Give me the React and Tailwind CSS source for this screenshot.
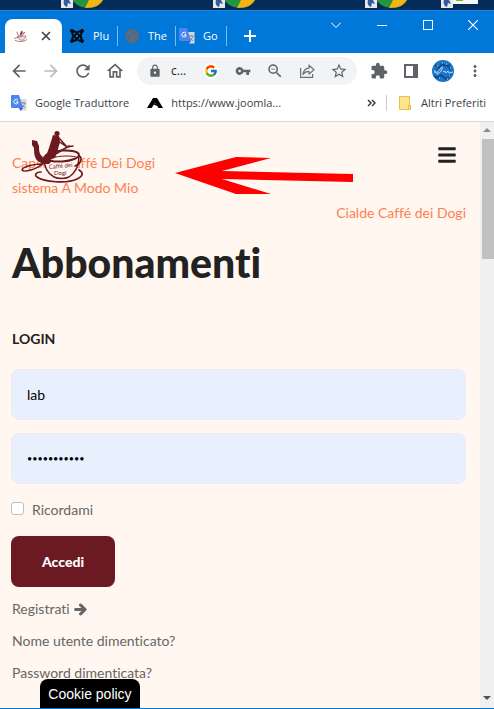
import React, { useState } from 'react';
import {
    MdArrowBack,
    MdArrowForward,
    MdRefresh,
    MdOutlineHome,
    MdLock,
    MdVpnKey,
    MdZoomOut,
    MdStarBorder,
    MdExtension,
    MdMoreVert,
} from 'react-icons/md';
import { FaJoomla, FaBars, FaArrowRight } from 'react-icons/fa';
import { FcGoogle } from 'react-icons/fc';

const CupLogo = ({ className }) => (
    <svg viewBox="0 0 64 54" className={className} fill="none" stroke="#6b1a22" strokeLinecap="round" aria-hidden="true">
        {/* saucer */}
        <path d="M20 41c-5 0-7 3-4 5 7 5 30 7 40 2 6-3 7-6 2-9" strokeWidth="1.700" />
        {/* cup */}
        <path d="M23 26c0 11 4 17 10 20 4 2 11 2 15 0 6-4 10-12 10-21z" fill="#fff7f0" strokeWidth="1.500" />
        <ellipse cx="41" cy="25" rx="17" ry="5.500" fill="#fff7f0" strokeWidth="2" transform="rotate(-4 41 25)" />
        <path d="M28 28c6-3 20-4 27-2" strokeWidth="1" />
        <path d="M58 25c4 1 2 8-4 10" strokeWidth="1.700" />
        {/* gondola prow */}
        <path d="M11 9l5 1 2 5c0 7 1 9 5 12l9 2-4 4c-13 0-15-6-15-16l-2-3z" fill="#6b1a22" stroke="none" />
        {/* rower */}
        <circle cx="36" cy="2.600" r="2.600" fill="#6b1a22" stroke="none" />
        <path d="M32 4l6 1 1 6-2 7-3 9-11 3 5-13z" fill="#6b1a22" stroke="none" />
        <path d="M38 7l8 9M37 10l9 6M46 16l6-1" strokeWidth="1.500" />
        {/* oar */}
        <path d="M48 15L33 24 20 34" strokeWidth="1.800" />
        <path d="M21 33c-6 0-19 2-20 6 2 3 15-1 20-6z" strokeWidth="1.500" />
        <g fill="#6b1a22" stroke="none" fontFamily="Lato, sans-serif" fontSize="6">
            <text x="28" y="38" transform="rotate(-5 28 38)">Caffé dei</text>
            <text x="33" y="44">Dogi</text>
        </g>
    </svg>
);

const TabCup = () => (
    <svg viewBox="0 0 16 14" className="h-3 w-4" fill="none" stroke="#9c656a" aria-hidden="true">
        <path d="M4 7c1 4 3 5 5 5s4-2 5-5z" fill="#ead9d8" strokeWidth=".8" />
        <path d="M3 2l2 5M9 1L7 7M9 4l4-1M12 3l-3 4L0 10M1 12c4 2 10 2 14-1" />
        <path d="M7 4l2-3 1 1-2 5z" fill="#7a2b33" stroke="none" />
    </svg>
);

const GlobeIcon = () => (
    <svg viewBox="0 0 14 14" className="h-[14px] w-[14px]" aria-hidden="true">
        <circle cx="7" cy="7" r="7" fill="#66696d" />
        <path d="M2 6c2 0 3 .5 3.500 2L4.500 8.500l.5 2-.5 1C3 11 1.500 8 2 6zM7 2.500h3l1.500 2-2 .5L8 5 7 6.500 6 4.500zM9 8.500l2.500-.5-1 2.500-1.500 1z" fill="#2a73b3" />
    </svg>
);

const TranslateIcon = () => (
    <svg viewBox="0 0 16 16" className="h-4 w-4 shrink-0" aria-hidden="true">
        <path d="M7 4h8.500v11.500H10z" fill="#d5d8dc" />
        <path d="M9.500 8h5M12 7v1M14 8c-.5 2-2 3.500-4 4.500M10.500 9.500c1 1.500 2 2.500 3.500 3" stroke="#6b7b83" strokeWidth=".8" fill="none" />
        <path d="M1 0h7l4 13H1a1 1 0 0 1-1-1V1a1 1 0 0 1 1-1z" fill="#4a86ee" />
        <path d="M8 13h4l-2.500 3z" fill="#2f5fc4" />
        <path d="M7 5.200A2.300 2.300 0 1 0 7 8V6.900H4.900" stroke="#fff" strokeWidth="1" fill="none" />
    </svg>
);

const ShareIcon = () => (
    <svg viewBox="0 0 16 16" className="h-4 w-4" fill="none" stroke="#6b6f74" strokeWidth="1.2" aria-hidden="true">
        <path d="M1.600 5v9.400h12V11" />
        <path d="M4 11.500c.4-4 2.500-6 6-6.300V2.200l5 4.500-5 4.400V8.300c-2.700 0-4.500 1-6 3.200z" strokeLinejoin="round" />
    </svg>
);

const ProfilePicture = () => (
    <svg viewBox="0 0 22 22" className="h-[22px] w-[22px]" aria-hidden="true">
        <circle cx="11" cy="11" r="11" fill="#1b74c4" />
        <path d="M3 5l4 3 3-4 4 2 4-1M2 16l4 2 3-3 5 4 5-4M4 9l2 3M16 6l3 4" stroke="#0c4688" strokeWidth="1.500" fill="none" />
        <path d="M5 6h1M14 4h1M7 18h1M17 16h1M10 3h1M2 11h2M15 19h1M18 8h1M5 14h1" stroke="#7cc0f0" strokeWidth="1.500" />
        <path d="M2 12c3 1 5-1 7-4 1-2 2-1 1 1-1 3-3 5-6 4M11 12l2-1 1 2 2-2 1 2 4-1" stroke="#e5f3ff" strokeWidth=".8" fill="none" />
    </svg>
);

const DesktopIcon = ({ kind }) => {
    if (kind === 'none') return <div className="w-[76px] shrink-0" />;
    return (
        <div className="flex w-[76px] shrink-0 overflow-hidden">
            <svg viewBox="0 0 42 10" className="h-[10px] w-[42px]" aria-hidden="true">
                {kind === 'chrome' ? (
                    <>
                        <path d="M11 0h31c-3 5-8 8-14 8-7 0-12-2-17-8z" fill="#239440" />
                        <path d="M28 0h14c-3 5-8 8-18 8z" fill="#f4b40f" />
                    </>
                ) : (
                    <>
                        <path d="M12 0h25v4H12z" fill="#f7f7f7" />
                        <path d="M15 0h7v1h-7z" fill="#77b82a" />
                    </>
                )}
                <path d="M0 0h12v8H0z" fill="#e8e8e8" />
                <path d="M3 0h5l2 4-3-1-1 4c-3-1-4-4-3-7z" fill="#315a9c" />
            </svg>
        </div>
    );
};

const desktopIcons = ['chrome', 'none', 'chrome', 'none', 'chrome', 'page'];

const backgroundTabs = [
    { title: 'Plu', icon: <FaJoomla size={16} className="text-black" /> },
    { title: 'The', icon: <GlobeIcon /> },
    { title: 'Go', icon: <TranslateIcon /> },
];

const TabStrip = () => (
    <div className="flex h-[43px] items-end border-t border-[#1b83dc] bg-[#0078d9] pl-[5px] text-white">
        <div className="flex h-[34px] w-[57px] shrink-0 items-center justify-between rounded-t-lg bg-white px-2">
            <TabCup />
            <button type="button" aria-label="Chiudi scheda" className="mr-[3px] text-[#3c4043]">
                <svg viewBox="0 0 10 10" className="h-[10px] w-[10px]" stroke="currentColor" strokeWidth="1.6">
                    <path d="M1 1l8 8M9 1l-8 8" />
                </svg>
            </button>
        </div>
        {backgroundTabs.map((tab) => (
            <div key={tab.title} className="flex h-[34px] w-[55px] shrink-0 items-center gap-2 pl-[7px]">
                <span className="flex w-4 shrink-0 justify-center">{tab.icon}</span>
                <span className="grow text-[11px] whitespace-nowrap">{tab.title}</span>
                <span className="h-5 w-px shrink-0 bg-[#7fbbec]" />
            </div>
        ))}
        <button type="button" aria-label="Nuova scheda" className="flex h-[34px] w-[46px] items-center justify-center">
            <svg viewBox="0 0 12 12" className="h-3 w-3" stroke="currentColor" strokeWidth="2">
                <path d="M6 0v12M0 6h12" />
            </svg>
        </button>
        <div className="mb-[14px] ml-auto flex self-stretch">
            <button type="button" aria-label="Cerca schede" className="flex w-[46px] items-center justify-center">
                <svg viewBox="0 0 10 6" className="h-[6px] w-[10px]" fill="none" stroke="currentColor">
                    <path d="M0 .5l5 5 5-5" />
                </svg>
            </button>
            <button type="button" aria-label="Riduci a icona" className="flex w-[46px] items-center justify-center">
                <span className="h-px w-[10px] bg-white" />
            </button>
            <button type="button" aria-label="Ingrandisci" className="flex w-[46px] items-center justify-center">
                <span className="h-[10px] w-[10px] border border-white" />
            </button>
            <button type="button" aria-label="Chiudi" className="flex w-[43px] items-center justify-center">
                <svg viewBox="0 0 10 10" className="h-[10px] w-[10px]" stroke="currentColor" strokeWidth="1.2">
                    <path d="M0 0l10 10M10 0L0 10" />
                </svg>
            </button>
        </div>
    </div>
);

const Toolbar = () => (
    <div className="flex h-9 items-center bg-white px-[3px] text-[#5f6368]">
        <button type="button" aria-label="Indietro" className="flex w-8 justify-center"><MdArrowBack size={20} /></button>
        <button type="button" aria-label="Avanti" className="flex w-8 justify-center text-[#babcbe]"><MdArrowForward size={20} /></button>
        <button type="button" aria-label="Ricarica" className="flex w-8 justify-center"><MdRefresh size={20} /></button>
        <button type="button" aria-label="Pagina iniziale" className="flex w-8 justify-center"><MdOutlineHome size={20} /></button>
        <div className="mx-[6px] flex h-7 min-w-0 grow items-center rounded-full bg-[#f1f3f4] pr-[2px] pl-[11px]">
            <MdLock size={14} className="shrink-0" />
            <span className="ml-[9px] grow text-xs text-[#202124]">c...</span>
            <span className="flex w-8 justify-center">
                <span className="flex h-4 w-4 items-center justify-center rounded-full bg-white"><FcGoogle size={14} /></span>
            </span>
            <button type="button" aria-label="Password" className="flex w-8 justify-center"><MdVpnKey size={16} /></button>
            <button type="button" aria-label="Zoom" className="flex w-8 justify-center"><MdZoomOut size={18} /></button>
            <button type="button" aria-label="Condividi" className="flex w-8 justify-center"><ShareIcon /></button>
            <button type="button" aria-label="Preferiti" className="flex w-8 justify-center"><MdStarBorder size={18} /></button>
        </div>
        <button type="button" aria-label="Estensioni" className="flex w-8 justify-center"><MdExtension size={18} /></button>
        <button type="button" aria-label="Riquadro laterale" className="flex w-8 justify-center">
            <span className="h-[14px] w-[14px] border-2 border-r-[5px] border-[#5f6368]" />
        </button>
        <button type="button" aria-label="Profilo" className="flex w-8 justify-center"><ProfilePicture /></button>
        <button type="button" aria-label="Menu" className="flex w-8 justify-center"><MdMoreVert size={18} /></button>
    </div>
);

const BookmarkBar = () => (
    <div className="flex h-[33px] items-center border-b border-[#d8d9d8] bg-white pr-2 pb-1 pl-[11px] text-[11px] whitespace-nowrap text-[#3c4043]">
        <a href="#traduttore" className="flex items-center gap-2"><TranslateIcon />Google Traduttore</a>
        <a href="#joomla" className="ml-[18px] flex items-center gap-2">
            <svg viewBox="0 0 16 12" className="h-3 w-4" aria-hidden="true">
                <path d="M6 1h4l6 10h-4.500L8 5.500 4.500 11H0z" fill="#000" />
                <path d="M4.500 11c1-3 3-4 4-2.500L10.500 9 8 5.500z" fill="#000" />
            </svg>
            https://www.joomla...
        </a>
        <button type="button" aria-label="Altri preferiti nascosti" className="ml-auto flex">
            <svg viewBox="0 0 9 8" className="h-2 w-[9px]" fill="none" stroke="#3c4043" strokeWidth="1.500">
                <path d="M1 1l3 3-3 3M5 1l3 3-3 3" />
            </svg>
        </button>
        <span className="mr-3 ml-[10px] h-4 w-px bg-[#c9cbcd]" />
        <a href="#preferiti" className="flex items-center gap-[10px]">
            <svg viewBox="0 0 12 14" className="h-[14px] w-3" aria-hidden="true">
                <path d="M.5.5h10v9h1v4H.5z" fill="#ffe48f" stroke="#e9bf45" />
                <path d="M9.500 13v-3.500h2" fill="none" stroke="#e9bf45" />
            </svg>
            Altri Preferiti
        </a>
    </div>
);

const SiteHeader = () => (
    <header className="relative flex flex-col pt-7 leading-[25px] text-[#ff7f50]">
        <a href="#capsule" className="w-40">Capsule Caffé Dei Dogi sistema A Modo Mio</a>
        <a href="#cialde" className="self-end">Cialde Caffé dei Dogi</a>
        <a href="#home" aria-label="Caffé dei Dogi" className="absolute top-[9px] left-[9px]">
            <CupLogo className="h-[54px] w-16" />
        </a>
        <button type="button" aria-label="Menu" className="absolute top-[23px] right-[9px] text-[#222]">
            <FaBars size={20} />
        </button>
        {/* arrow pointing at the logo */}
        <svg viewBox="0 0 178 38" className="absolute top-[34px] left-[163px] h-[38px] w-[178px]" fill="#f00" aria-hidden="true">
            <path d="M0 17L61 1l35 1-49 13 131 3v8l-131-3 49 15H61z" />
        </svg>
    </header>
);

const LoginForm = () => {
    const [username, setUsername] = useState('lab');
    const [password, setPassword] = useState('abbonamenti');
    const [remember, setRemember] = useState(false);

    return (
        <form onSubmit={(e) => e.preventDefault()} className="-ml-px">
            <input
                type="text"
                aria-label="Nome utente"
                value={username}
                onChange={(e) => setUsername(e.target.value)}
                className="block h-[51px] w-full rounded-lg border border-[#ececf0] bg-[#e8f0fe] px-[15px] text-sm text-black"
            />
            <input
                type="password"
                aria-label="Password"
                value={password}
                onChange={(e) => setPassword(e.target.value)}
                className="mt-[13px] block h-[51px] w-full rounded-lg border border-[#ececf0] bg-[#e8f0fe] px-[15px] text-[9px] text-black"
            />
            <div className="mt-[14px] flex h-6 items-center gap-2">
                <input
                    id="remember"
                    type="checkbox"
                    checked={remember}
                    onChange={(e) => setRemember(e.target.checked)}
                    className="mb-1 h-[13px] w-[13px] appearance-none rounded-[3px] border border-[#bfbfbf] bg-white checked:bg-[#6b1a22]"
                />
                <label htmlFor="remember">Ricordami</label>
            </div>
            <button type="submit" className="mt-[14px] h-[51px] w-[104px] rounded-lg bg-[#6b1a22] text-sm font-black text-white">
                Accedi
            </button>
        </form>
    );
};

const ScrollBar = () => (
    <div className="flex w-[14px] shrink-0 flex-col items-center bg-[#f0f0f0] pt-[6px] pb-2" aria-hidden="true">
        <svg viewBox="0 0 8 4" className="h-1 w-2" fill="#8b8b8b"><path d="M4 0l4 4H0z" /></svg>
        <div className="mt-[7px] ml-[2px] h-[120px] w-3 bg-[#c1c1c1]" />
        <svg viewBox="0 0 8 4" className="mt-auto h-1 w-2" fill="#505050"><path d="M0 0h8L4 4z" /></svg>
    </div>
);

const App = () => (
    <div className="flex min-h-screen flex-col bg-white font-['Open_Sans',sans-serif]">
        <div className="flex h-[10px] overflow-hidden bg-[#042c5a] pl-[61px]">
            {desktopIcons.map((kind, index) => (
                <DesktopIcon key={index} kind={kind} />
            ))}
        </div>
        <TabStrip />
        <Toolbar />
        <BookmarkBar />
        <div className="relative flex grow border-b border-[#0078d9] bg-[#fff7f0]">
            <main className="min-w-0 grow pr-[14px] pl-3 font-['Lato',sans-serif] text-sm text-[#666] [font-variant-ligatures:none]">
                <SiteHeader />
                <h1 className="mt-3 text-[41px] leading-[52px] font-black text-[#222]">Abbonamenti</h1>
                <h2 className="mt-10 mb-5 leading-5 font-bold text-[#222]">LOGIN</h2>
                <LoginForm />
                <ul className="mt-[6px] leading-8">
                    <li>
                        <a href="#registrati" className="inline-flex items-center gap-1">
                            Registrati <FaArrowRight size={13} stroke="currentColor" strokeWidth={40} />
                        </a>
                    </li>
                    <li><a href="#utente">Nome utente dimenticato?</a></li>
                    <li><a href="#password-dimenticata">Password dimenticata?</a></li>
                </ul>
            </main>
            <ScrollBar />
            <button type="button" className="absolute bottom-0 left-10 h-[29px] w-[100px] rounded-t-lg bg-black font-['Liberation_Sans',sans-serif] text-sm text-white">
                Cookie policy
            </button>
        </div>
    </div>
);

export default App;
